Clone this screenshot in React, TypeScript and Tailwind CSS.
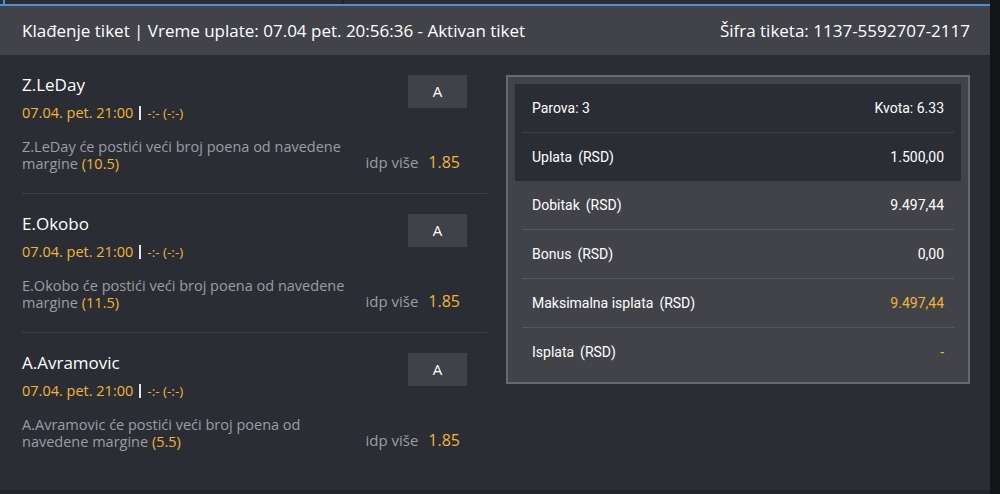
import React from 'react';

type Pick = {
  name: string;
  lines: string[];
  margin: string;
};

const picks: Pick[] = [
  { name: 'Z.LeDay', lines: ['Z.LeDay će postići veći broj poena od navedene', 'margine'], margin: '10.5' },
  { name: 'E.Okobo', lines: ['E.Okobo će postići veći broj poena od navedene', 'margine'], margin: '11.5' },
  { name: 'A.Avramovic', lines: ['A.Avramovic će postići veći broj poena od', 'navedene margine'], margin: '5.5' },
];

const PickRow: React.FC<{ pick: Pick; last: boolean; first: boolean }> = ({ pick, last, first }) => (
  <div className={`flex justify-between pr-[20px] ${first ? '' : 'pt-[20px]'} ${last ? '' : 'pb-[21px] border-b border-[#3f4148]'}`}>
    <div className="flex min-w-0 flex-1 flex-col">
      <div className="text-[17px] leading-[20px] text-white">{pick.name}</div>
      <div className="mt-[9px] flex items-center text-[14.5px] leading-[18px] text-[#f0b534]">
        <span>07.04. pet. 21:00</span>
        <span className="mx-[6px] inline-block h-[14px] w-[2px] bg-[#e6e6e6]" />
        <span className="text-[13.5px]">-:- (-:-)</span>
      </div>
      <div className="mt-[16px] whitespace-nowrap text-[14.5px] leading-[17px] text-[#9c9da2]">
        <div>{pick.lines[0]}</div>
        <div>
          {pick.lines[1]} <span className="text-[#f0b534]">({pick.margin})</span>
        </div>
      </div>
    </div>
    <div className="flex w-[100px] shrink-0 flex-col items-end justify-between">
      <div className="flex h-[33px] w-[59px] items-center justify-center bg-[#404249] text-[15px] text-white">A</div>
      <div className="-mb-[2px] flex items-baseline whitespace-nowrap pr-[7px]">
        <span className="text-[15px] text-[#9c9da2]">idp više</span>
        <span className="ml-[10px] text-[16px] text-[#f0b534]">1.85</span>
      </div>
    </div>
  </div>
);

const SumRow: React.FC<{ label: string; unit?: boolean; value: string; gold?: boolean; divider?: string }> = ({
  label,
  unit = true,
  value,
  gold,
  divider,
}) => (
  <div
    className={`flex items-center justify-between px-[10px] ${divider ? `h-[49px] border-b ${divider}` : 'h-[48px]'}`}
  >
    <span className="text-white">
      {label}
      {unit && <span className="ml-[6px]">(RSD)</span>}
    </span>
    <span className={gold ? 'text-[#f0b534]' : 'text-white'}>{value}</span>
  </div>
);

export default function App() {
  return (
    <div className="flex h-[494px] w-[1000px] bg-[#121417]" style={{ fontFamily: '"Open Sans", Lato, sans-serif' }}>
      <div className="flex w-[990px] flex-col bg-[#23252a]">
        {/* strip of the panel above */}
        <div className="flex h-[6px] border-b-2 border-[#4a8fd8] bg-[#2b2d35] pl-[3px]">
          <div className="w-[2px] bg-[#4a8fd8]" />
          <div className="w-[339px] border-r-2 border-[#1f2126]" />
        </div>

        {/* header */}
        <div className="flex h-[49px] items-center justify-between bg-[#414349] px-[22px] pr-[20px] text-[17px] text-white">
          <span>Klađenje tiket | Vreme uplate: 07.04 pet. 20:56:36 - Aktivan tiket</span>
          <span>Šifra tiketa: 1137-5592707-2117</span>
        </div>

        {/* body */}
        <div className="flex h-[435px] gap-[19px] bg-[#2b2d35] pl-[22px] pr-[20px] pt-[20px]">
          <div className="flex w-[465px] shrink-0 flex-col">
            {picks.map((p, i) => (
              <PickRow key={p.name} pick={p} first={i === 0} last={i === picks.length - 1} />
            ))}
          </div>

          <div
            className="h-[309px] w-[464px] shrink-0 border-2 border-[#67696f] bg-[#414349] p-[7px] text-[14px]"
            style={{ fontFamily: 'Roboto, sans-serif' }}
          >
            <div className="bg-[#2b2d35] px-[7px]">
              <SumRow label="Parova: 3" unit={false} value="Kvota: 6.33" divider="border-[#40424a]" />
              <SumRow label="Uplata" value="1.500,00" />
            </div>
            <div className="px-[7px]">
              <SumRow label="Dobitak" value="9.497,44" divider="border-[#55575d]" />
              <SumRow label="Bonus" value="0,00" divider="border-[#55575d]" />
              <SumRow label="Maksimalna isplata" value="9.497,44" gold divider="border-[#55575d]" />
              <SumRow label="Isplata" value="-" gold />
            </div>
          </div>
        </div>
        <div className="flex-1 bg-[#222429]" />
      </div>
    </div>
  );
}
